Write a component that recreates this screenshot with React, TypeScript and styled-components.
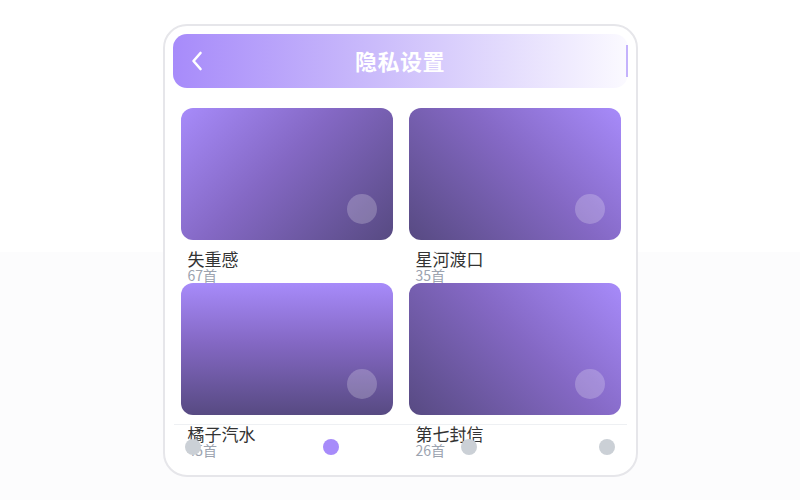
import React from "react";
import styled, { createGlobalStyle } from "styled-components";

const GlobalStyle = createGlobalStyle`
  html {
    background: linear-gradient(#ffffff 0, #ffffff 252px, #fcfcfd 252px);
    min-height: 100%;
  }
  body {
    margin: 0;
    font-family: "Noto Sans CJK SC", "Noto Sans", sans-serif;
  }
`;

interface Album {
  title: string;
  count: string;
  angle: string;
}

const albums: Album[] = [
  { title: "失重感", count: "67首", angle: "135deg" },
  { title: "星河渡口", count: "35首", angle: "225deg" },
  { title: "橘子汽水", count: "45首", angle: "180deg" },
  { title: "第七封信", count: "26首", angle: "225deg" },
];

const App: React.FC = () => {
  return (
    <>
      <GlobalStyle />
      <Phone>
        <Header>
          <BackButton aria-label="返回">
            <svg width="12" height="20" viewBox="0 0 12 20" fill="none">
              <path
                d="M9.5 2 L2.5 10 L9.5 18"
                stroke="#ffffff"
                strokeWidth="2.6"
                strokeLinecap="round"
                strokeLinejoin="round"
              />
            </svg>
          </BackButton>
          <Title>隐私设置</Title>
        </Header>
        <Grid>
          {albums.map((a) => (
            <Item key={a.title}>
              <Cover $angle={a.angle}>
                <PlayDot />
              </Cover>
              <ItemTitle>{a.title}</ItemTitle>
              <ItemCount>{a.count}</ItemCount>
            </Item>
          ))}
        </Grid>
        <TabBar>
          <TabDot />
          <TabDot $active />
          <TabDot />
          <TabDot />
        </TabBar>
      </Phone>
    </>
  );
};

const Phone = styled.div`
  position: relative;
  box-sizing: border-box;
  width: 475px;
  height: 453px;
  margin: 24px auto 0;
  padding: 8px;
  border: 2px solid #e6e6ea;
  border-radius: 24px;
  background: #ffffff;
  overflow: hidden;
`;

const Header = styled.div`
  position: relative;
  box-sizing: border-box;
  height: 54px;
  display: flex;
  align-items: center;
  justify-content: center;
  border-radius: 14px;
  background: linear-gradient(90deg, #a78bfa 0%, #cbbcfb 45%, #fbfaff 100%);

  &::after {
    content: "";
    position: absolute;
    right: 0;
    top: 11px;
    bottom: 11px;
    width: 1.5px;
    background: #c4b2fc;
  }
`;

const BackButton = styled.button`
  position: absolute;
  left: 18px;
  top: 50%;
  transform: translateY(-50%);
  display: flex;
  padding: 0;
  border: none;
  background: none;
`;

const Title = styled.h1`
  margin: -3px 0 0;
  font-size: 22px;
  line-height: 30px;
  font-weight: 700;
  color: #ffffff;
  letter-spacing: 0.5px;
`;

const Grid = styled.div`
  display: grid;
  grid-template-columns: 212px 212px;
  grid-auto-rows: 159px;
  gap: 16px;
  margin: 20px 8px 0;
`;

const Item = styled.div`
  display: flex;
  flex-direction: column;
  min-height: 0;
`;

const Cover = styled.div<{ $angle: string }>`
  flex: none;
  box-sizing: border-box;
  height: 132px;
  display: flex;
  align-items: flex-end;
  justify-content: flex-end;
  padding: 16px;
  border-radius: 12px;
  background: linear-gradient(${(p) => p.$angle}, #a78bfa 0%, #8468c4 45%, #574a82 100%);
`;

const PlayDot = styled.span`
  width: 30px;
  height: 30px;
  border-radius: 50%;
  background: rgba(255, 255, 255, 0.22);
`;

const ItemTitle = styled.div`
  margin: 10px 0 0 7px;
  font-size: 17px;
  line-height: 17px;
  color: #333333;
  white-space: nowrap;
`;

const ItemCount = styled.div`
  margin-left: 7px;
  font-size: 14px;
  line-height: 16px;
  color: #9ca3af;
  white-space: nowrap;
`;

const TabBar = styled.div`
  position: absolute;
  left: 9px;
  right: 9px;
  bottom: 0;
  display: flex;
  justify-content: space-between;
  padding: 14px 11px 20px;
  border-top: 1px solid #eef0f3;
`;

const TabDot = styled.span<{ $active?: boolean }>`
  width: 16px;
  height: 16px;
  border-radius: 50%;
  background: ${(p) => (p.$active ? "#a78bfa" : "#cbd0d6")};
`;

export default App;
